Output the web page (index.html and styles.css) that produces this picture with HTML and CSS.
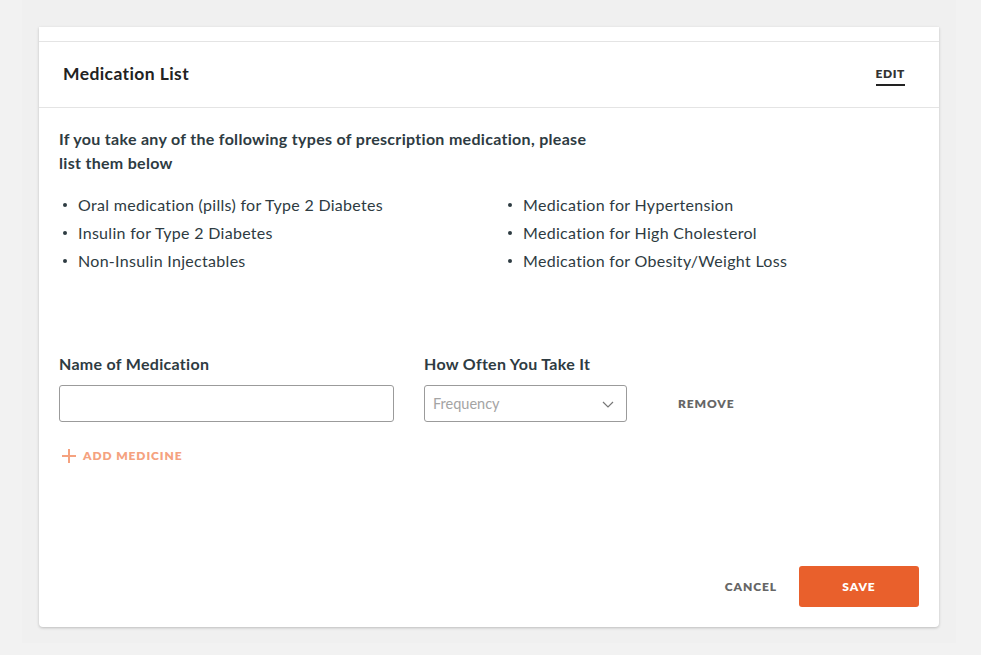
FILE: index.html
```html
<!DOCTYPE html>
<html lang="en">
<head>
<meta charset="utf-8">
<title>Medication List</title>
<link rel="stylesheet" href="styles.css">
</head>
<body>
<div class="page">
  <div class="card">
    <div class="card-top"></div>
    <div class="card-header">
      <h2 class="title">Medication List</h2>
      <a class="edit" href="#">EDIT</a>
    </div>
    <div class="card-body">
      <p class="intro">If you take any of the following types of prescription medication, please list them below</p>
      <ul class="types">
        <li>Oral medication (pills) for Type 2 Diabetes</li>
        <li>Medication for Hypertension</li>
        <li>Insulin for Type 2 Diabetes</li>
        <li>Medication for High Cholesterol</li>
        <li>Non-Insulin Injectables</li>
        <li>Medication for Obesity/Weight Loss</li>
      </ul>
      <div class="med-row">
        <div class="field field-name">
          <label class="label">Name of Medication</label>
          <input class="input" type="text">
        </div>
        <div class="field field-freq">
          <label class="label">How Often You Take It</label>
          <div class="select">
            <span class="placeholder">Frequency</span>
            <svg class="chevron" width="12" height="7" viewBox="0 0 12 7"><path d="M1 1l5 5 5-5" fill="none" stroke="#777" stroke-width="1.2"/></svg>
          </div>
        </div>
        <a class="remove" href="#">REMOVE</a>
      </div>
      <a class="add" href="#">
        <svg class="plus" width="14" height="14" viewBox="0 0 14 14"><path d="M7 0v14M0 7h14" stroke="#f5a27f" stroke-width="2"/></svg>
        <span>ADD MEDICINE</span>
      </a>
      <div class="footer">
        <a class="cancel" href="#">CANCEL</a>
        <button class="save" type="button">SAVE</button>
      </div>
    </div>
  </div>
</div>
</body>
</html>
```
FILE: styles.css
```css
* { box-sizing: border-box; }
html, body { margin: 0; padding: 0; }
body {
  background: #f2f2f2;
  font-family: Lato, "Open Sans", sans-serif;
  color: #2e3b42;
  width: 981px;
  height: 655px;
  overflow: hidden;
}
.page {
  margin-left: 22px;
  width: 934px;
  background: #f0f0f0;
  padding: 27px 17px 16px;
}
.card {
  width: 900px;
  background: #fff;
  border-radius: 0 0 4px 4px;
  box-shadow: 0 1px 3px rgba(0,0,0,0.22);
}
.card-top {
  height: 15px;
  border-bottom: 1px solid #e4e4e4;
}
.card-header {
  height: 66px;
  border-bottom: 1px solid #e4e4e4;
  display: flex;
  align-items: center;
  justify-content: space-between;
  padding: 0 34px 0 24px;
}
.title {
  margin: 0;
  margin-top: -2px;
  font-size: 17.5px;
  font-weight: 700;
  color: #222;
  letter-spacing: 0.4px;
}
.edit {
  font-size: 12px;
  font-weight: 800;
  color: #333;
  text-decoration: none;
  letter-spacing: 0.6px;
  border-bottom: 2px solid #222;
  line-height: 14px;
  padding-bottom: 3px;
  margin-top: 4px;
}
.card-body {
  padding: 19px 20px 20px;
}
.intro {
  margin: 0;
  width: 545px;
  font-size: 16px;
  line-height: 24px;
  font-weight: 700;
  letter-spacing: 0.3px;
  color: #2e3b42;
}
.types {
  list-style: none;
  margin: 16px 0 0;
  padding: 0;
  display: grid;
  grid-template-columns: 445px 1fr;
}
.types li {
  display: flex;
  align-items: center;
  font-size: 16px;
  letter-spacing: 0.3px;
  line-height: 28px;
  color: #2e3b42;
}
.types li::before {
  content: "";
  width: 4px;
  height: 4px;
  border-radius: 50%;
  background: #2e3b42;
  margin: 0 11px 0 4px;
  flex: none;
}
.med-row {
  margin-top: 79px;
  display: flex;
  align-items: flex-end;
}
.field { display: flex; flex-direction: column; }
.field-name { width: 335px; }
.field-freq { width: 203px; margin-left: 30px; }
.label {
  font-size: 16px;
  letter-spacing: 0.3px;
  line-height: 20px;
  font-weight: 700;
  color: #2e3b42;
  margin-bottom: 11px;
}
.input {
  height: 37px;
  border: 1px solid #9b9b9b;
  border-radius: 3px;
  font: inherit;
  padding: 0 8px;
  width: 100%;
}
.select {
  height: 37px;
  border: 1px solid #9b9b9b;
  border-radius: 3px;
  display: flex;
  align-items: center;
  justify-content: space-between;
  padding: 0 12px 0 8px;
}
.placeholder {
  font-size: 14.5px;
  color: #a4a4a4;
}
.chevron { margin-top: 1px; }
.remove {
  margin-left: 51px;
  height: 37px;
  display: flex;
  align-items: center;
  font-size: 12px;
  font-weight: 800;
  letter-spacing: 0.9px;
  color: #666;
  text-decoration: none;
}
.add {
  margin-top: 24px;
  margin-left: 3px;
  display: inline-flex;
  align-items: center;
  gap: 7px;
  font-size: 12px;
  font-weight: 800;
  letter-spacing: 0.9px;
  color: #f5a27f;
  text-decoration: none;
  line-height: 20px;
}
.footer {
  margin-top: 100px;
  display: flex;
  justify-content: flex-end;
  align-items: center;
  gap: 22px;
}
.cancel {
  font-size: 12px;
  font-weight: 800;
  letter-spacing: 0.9px;
  color: #666;
  text-decoration: none;
}
.save {
  width: 120px;
  height: 41px;
  border: none;
  border-radius: 3px;
  background: #e9602c;
  color: #fff;
  font-family: inherit;
  font-size: 12px;
  font-weight: 800;
  letter-spacing: 0.9px;
}
```
